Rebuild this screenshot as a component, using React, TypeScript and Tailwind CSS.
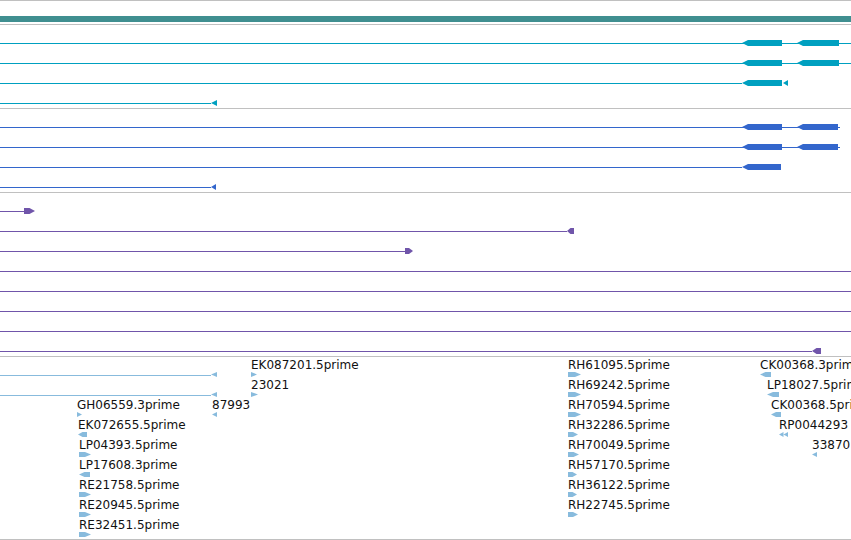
import React from "react";

type Shape = "lb" | "rb" | "lt" | "rt" | "llt";
type Glyph = { s: Shape; x1: number; x2: number };
type RowDef = { line?: [number, number]; glyphs: Glyph[] };
type Label = { x: number; text: string };
type LabelRowDef = RowDef & { labels: Label[] };

function shapePoints(g: Glyph, top: number, bot: number): string {
  const mid = (top + bot) / 2;
  const { x1, x2 } = g;
  const head = Math.min(6, Math.max(3, (x2 - x1) / 2));
  switch (g.s) {
    case "lb":
      return `${x1},${mid} ${x1 + head},${top} ${x2},${top} ${x2},${bot} ${x1 + head},${bot}`;
    case "rb":
      return `${x1},${top} ${x2 - head},${top} ${x2},${mid} ${x2 - head},${bot} ${x1},${bot}`;
    case "lt":
      return `${x1},${mid} ${x2},${top} ${x2},${bot}`;
    case "rt":
      return `${x1},${top} ${x2},${mid} ${x1},${bot}`;
    case "llt": {
      const m = (x1 + x2) / 2;
      return `${x1},${mid} ${m},${top} ${m},${mid} ${x2},${top} ${x2},${bot} ${m},${mid} ${m},${bot}`;
    }
  }
}

function TrackRow({
  row,
  color,
  top = 15,
  bot = 21,
  children,
}: {
  row: RowDef;
  color: string;
  top?: number;
  bot?: number;
  children?: React.ReactNode;
}) {
  return (
    <div className="relative h-[20px] w-full">
      <svg
        className="absolute left-0 top-0 overflow-visible"
        width={851}
        height={20}
        viewBox="0 0 851 20"
      >
        {row.line && (
          <line
            x1={row.line[0]}
            x2={row.line[1]}
            y1={18.5}
            y2={18.5}
            stroke={color}
            strokeWidth={1}
            shapeRendering="crispEdges"
          />
        )}
        {row.glyphs.map((g, i) => (
          <polygon key={i} points={shapePoints(g, top, bot)} fill={color} />
        ))}
      </svg>
      {children}
    </div>
  );
}

const teal: RowDef[] = [
  { line: [0, 851], glyphs: [{ s: "lb", x1: 742, x2: 782 }, { s: "lb", x1: 797, x2: 839 }] },
  { line: [0, 851], glyphs: [{ s: "lb", x1: 742, x2: 782 }, { s: "lb", x1: 797, x2: 839 }] },
  { line: [0, 742], glyphs: [{ s: "lb", x1: 742, x2: 782 }, { s: "lt", x1: 783, x2: 788 }] },
  { line: [0, 211], glyphs: [{ s: "lt", x1: 211, x2: 217 }] },
];

const blue: RowDef[] = [
  { line: [0, 840], glyphs: [{ s: "lb", x1: 742, x2: 782 }, { s: "lb", x1: 797, x2: 838 }] },
  { line: [0, 840], glyphs: [{ s: "lb", x1: 742, x2: 782 }, { s: "lb", x1: 797, x2: 838 }] },
  { line: [0, 742], glyphs: [{ s: "lb", x1: 742, x2: 781 }] },
  { line: [0, 211], glyphs: [{ s: "lt", x1: 211, x2: 216 }] },
];

const purple: RowDef[] = [
  { line: [0, 24], glyphs: [{ s: "rb", x1: 24, x2: 35 }] },
  { line: [0, 567], glyphs: [{ s: "lb", x1: 567, x2: 574 }] },
  { line: [0, 405], glyphs: [{ s: "rb", x1: 405, x2: 413 }] },
  { line: [0, 851], glyphs: [] },
  { line: [0, 851], glyphs: [] },
  { line: [0, 851], glyphs: [] },
  { line: [0, 851], glyphs: [] },
  { line: [0, 812], glyphs: [{ s: "lb", x1: 812, x2: 821 }] },
];

const est: LabelRowDef[] = [
  {
    line: [0, 211],
    glyphs: [
      { s: "lt", x1: 211, x2: 217 },
      { s: "rt", x1: 251, x2: 257 },
      { s: "rb", x1: 568, x2: 581 },
      { s: "lb", x1: 760, x2: 771 },
    ],
    labels: [
      { x: 251, text: "EK087201.5prime" },
      { x: 568, text: "RH61095.5prime" },
      { x: 760, text: "CK00368.3prime" },
    ],
  },
  {
    line: [0, 211],
    glyphs: [
      { s: "lt", x1: 211, x2: 217 },
      { s: "rt", x1: 251, x2: 258 },
      { s: "rb", x1: 568, x2: 581 },
      { s: "lb", x1: 767, x2: 779 },
    ],
    labels: [
      { x: 251, text: "23021" },
      { x: 568, text: "RH69242.5prime" },
      { x: 767, text: "LP18027.5prime" },
    ],
  },
  {
    glyphs: [
      { s: "rt", x1: 77, x2: 82 },
      { s: "lt", x1: 212, x2: 217 },
      { s: "rb", x1: 568, x2: 581 },
      { s: "lb", x1: 771, x2: 781 },
    ],
    labels: [
      { x: 77, text: "GH06559.3prime" },
      { x: 212, text: "87993" },
      { x: 568, text: "RH70594.5prime" },
      { x: 771, text: "CK00368.5prime" },
    ],
  },
  {
    glyphs: [
      { s: "lb", x1: 78, x2: 87 },
      { s: "rb", x1: 568, x2: 578 },
      { s: "llt", x1: 779, x2: 788 },
    ],
    labels: [
      { x: 78, text: "EK072655.5prime" },
      { x: 568, text: "RH32286.5prime" },
      { x: 779, text: "RP0044293" },
    ],
  },
  {
    glyphs: [
      { s: "rb", x1: 79, x2: 91 },
      { s: "rb", x1: 568, x2: 579 },
      { s: "lt", x1: 812, x2: 817 },
    ],
    labels: [
      { x: 79, text: "LP04393.5prime" },
      { x: 568, text: "RH70049.5prime" },
      { x: 812, text: "33870" },
    ],
  },
  {
    glyphs: [
      { s: "lb", x1: 79, x2: 90 },
      { s: "rb", x1: 568, x2: 577 },
    ],
    labels: [
      { x: 79, text: "LP17608.3prime" },
      { x: 568, text: "RH57170.5prime" },
    ],
  },
  {
    glyphs: [
      { s: "rb", x1: 79, x2: 91 },
      { s: "rb", x1: 568, x2: 577 },
    ],
    labels: [
      { x: 79, text: "RE21758.5prime" },
      { x: 568, text: "RH36122.5prime" },
    ],
  },
  {
    glyphs: [
      { s: "rb", x1: 79, x2: 91 },
      { s: "rb", x1: 568, x2: 578 },
    ],
    labels: [
      { x: 79, text: "RE20945.5prime" },
      { x: 568, text: "RH22745.5prime" },
    ],
  },
  {
    glyphs: [{ s: "rb", x1: 79, x2: 91 }],
    labels: [{ x: 79, text: "RE32451.5prime" }],
  },
];

function Sep() {
  return <div className="h-px w-full shrink-0 bg-[#c0c0c0]" />;
}

export default function App() {
  return (
    <div
      className="relative flex h-[540px] w-[851px] flex-col overflow-hidden bg-white"
      style={{ fontFamily: '"DejaVu Sans", Verdana, sans-serif' }}
    >
      <Sep />
      <div className="h-[15px] shrink-0" />
      <div className="h-[6px] w-full shrink-0 bg-[#408f90]" />
      <div className="h-[2px] shrink-0" />
      <Sep />
      <div className="flex shrink-0 flex-col pb-[3px]">
        {teal.map((r, i) => (
          <TrackRow key={i} row={r} color="#00a0c0" />
        ))}
      </div>
      <Sep />
      <div className="flex shrink-0 flex-col pb-[3px]">
        {blue.map((r, i) => (
          <TrackRow key={i} row={r} color="#3366cc" />
        ))}
      </div>
      <Sep />
      <div className="flex shrink-0 flex-col pb-[3px]">
        {purple.map((r, i) => (
          <TrackRow key={i} row={r} color="#7055aa" />
        ))}
      </div>
      <Sep />
      <div className="flex shrink-0 flex-col pb-[2px]">
        {est.map((r, i) => (
          <TrackRow key={i} row={r} color="#88bbdd" top={15} bot={20}>
            {r.labels.map((l, j) => (
              <span
                key={j}
                className="absolute top-px whitespace-nowrap text-[12px] leading-[14px] text-[#111]"
                style={{ left: l.x }}
              >
                {l.text}
              </span>
            ))}
          </TrackRow>
        ))}
      </div>
      <Sep />
    </div>
  );
}
